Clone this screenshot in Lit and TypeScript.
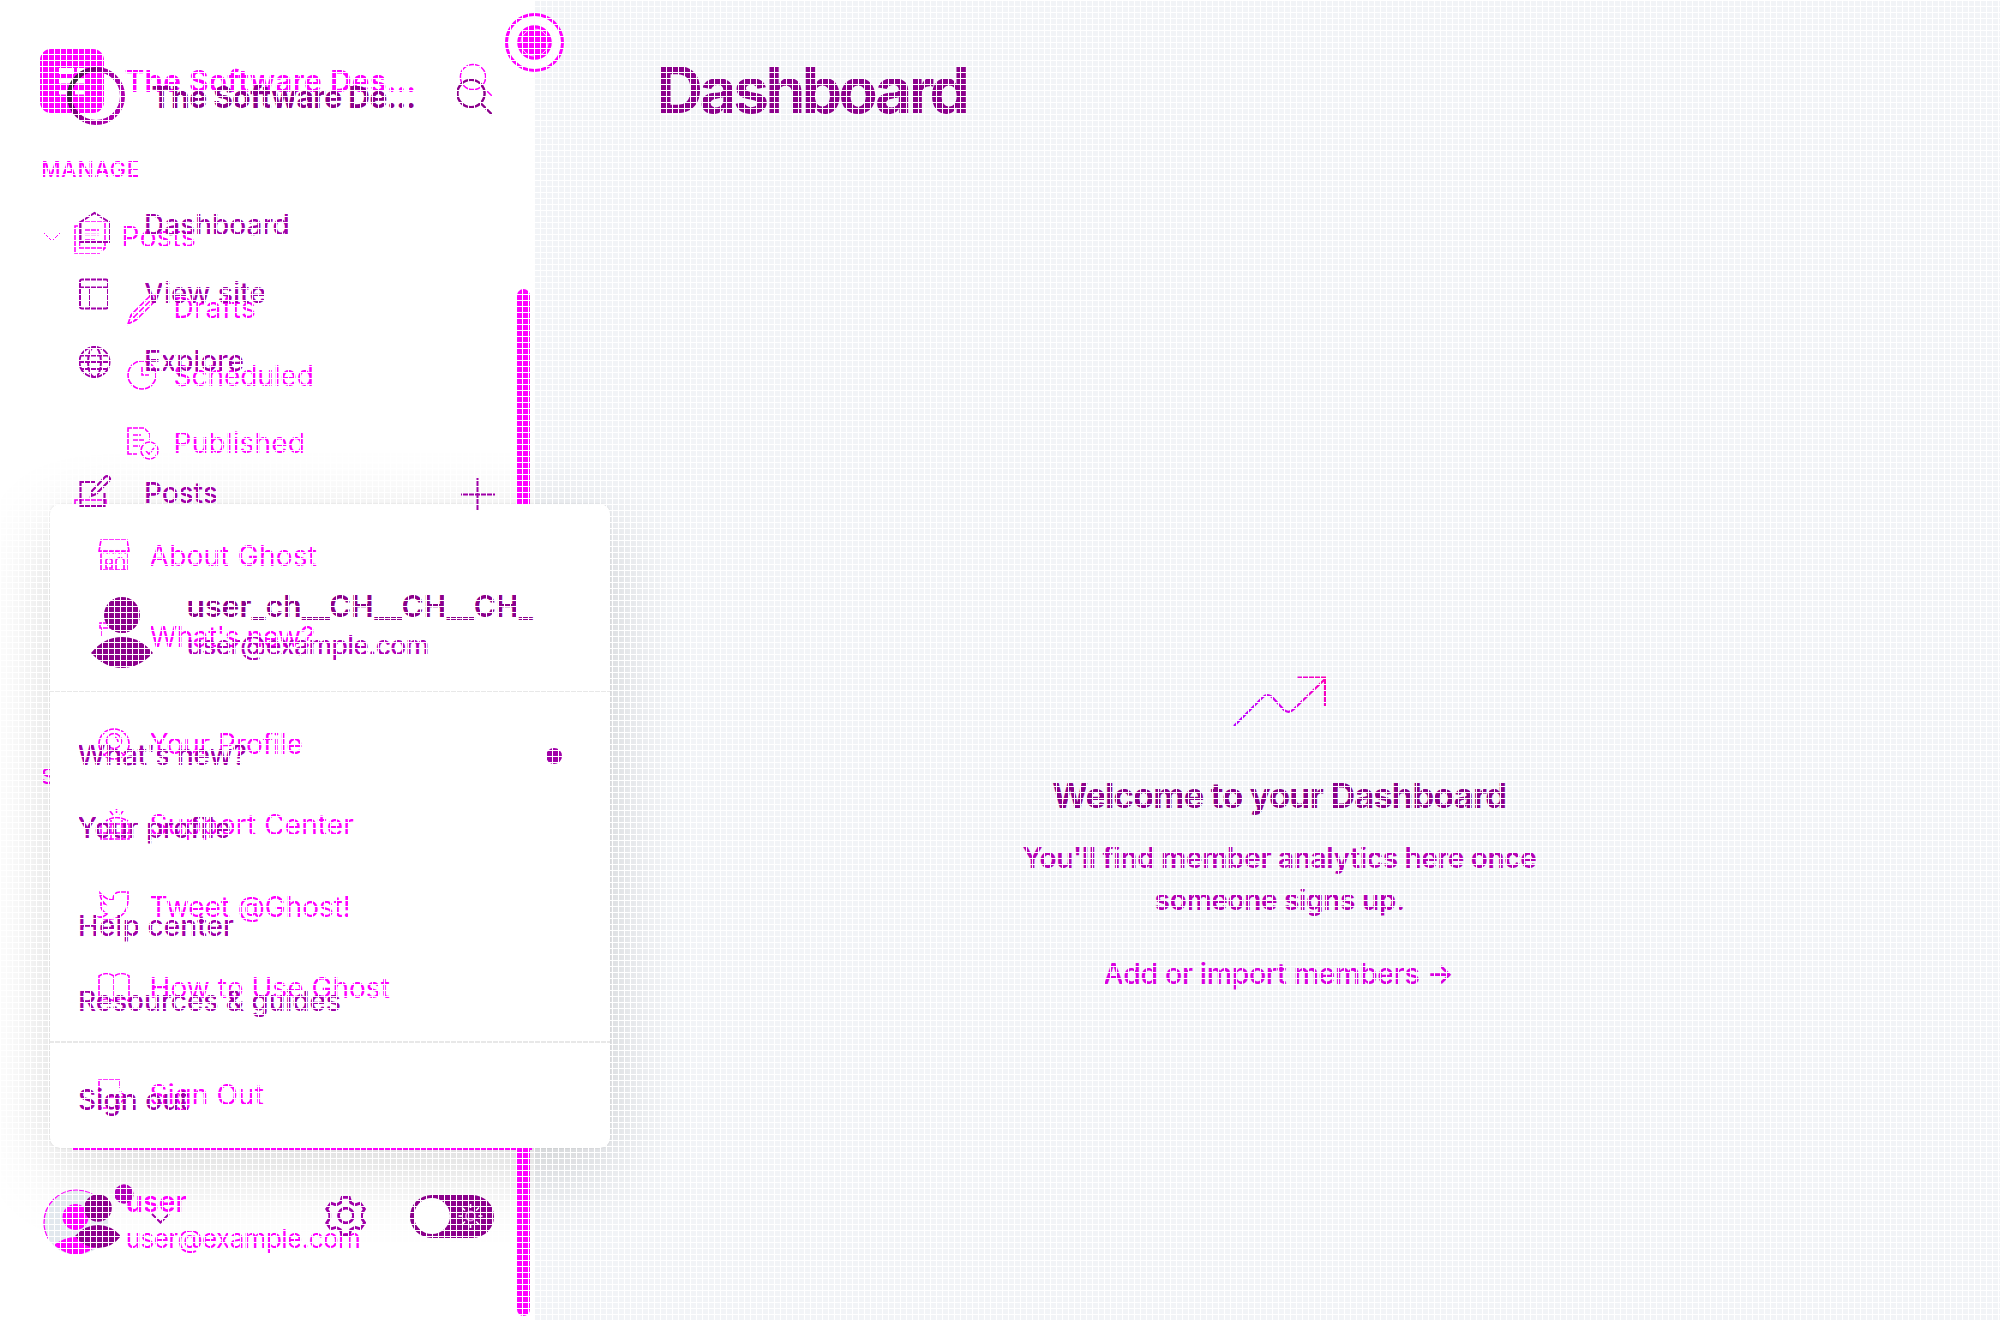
import { LitElement, html, svg, css, TemplateResult } from "lit";
import { customElement } from "lit/decorators.js";
import { styleMap } from "lit/directives/style-map.js";

const HOT = "#ff00ff";
const DEEP = "#8b008b";
const MID = "#a000a8";
const ROW = 40;

const pen = document.createElement("canvas").getContext("2d")!;

/** Letter spacing that makes a label span the given width. */
function tracking(text: string, size: number, weight: number, width: number): number {
  pen.font = `${weight} ${size}px Inter`;
  return (width - pen.measureText(text).width) / (text.length - 1);
}

interface Part { x: number; body: TemplateResult; }
interface Row { mid: number; parts: Part[]; }

/** A label whose ink runs from x to end. */
function label(x: number, end: number, text: string, size: number, weight: number, color: string): Part {
  const from = x - size * 0.05;
  const width = end - from + size * 0.03;
  return {
    x: from,
    body: html`<span class="label" style=${styleMap({
      fontSize: `${size}px`,
      fontWeight: String(weight),
      color,
      letterSpacing: `${tracking(text, size, weight, width)}px`,
    })}>${text}</span>`,
  };
}

/** A line icon on a 32 unit box that is centred in its row. */
function icon(x: number, color: string, width: number, shape: TemplateResult): Part {
  return {
    x,
    body: html`<svg class="icon" width="32" height="32" viewBox="0 0 32 32" fill="none"
      stroke=${color} stroke-width=${width}>${shape}</svg>`,
  };
}

function rows(list: Row[]): TemplateResult[] {
  let edge = 0;
  return list.map((r) => {
    const gap = r.mid - ROW / 2 - edge;
    edge = r.mid + ROW / 2;
    return html`<div class="row" style=${styleMap({ marginTop: `${gap}px` })}>
      ${r.parts.map((p) => html`<div class="part" style=${styleMap({ marginLeft: `${p.x}px` })}>${p.body}</div>`)}
    </div>`;
  });
}

const shapes = {
  home: svg`<path d="M1.500 13 15.500 4 30 13V33H1.500Z"/>`,
  layout: svg`<rect x="1" y="2.500" width="28" height="29" rx="2"/><path d="M1 10.500h28M11 10.500v21"/>`,
  globe: svg`<circle cx="15.500" cy="17" r="15"/><ellipse cx="15.500" cy="17" rx="6.500" ry="15"/><path d="M.5 17h30M2.500 10.500h26M2.500 24h26"/>`,
  edit: svg`<path d="M16 5H1.500v24h24V15M12 19l1-5L26 0q2-2 4 0 2 2 0 4L17 17Z"/>`,
  plus: svg`<path d="M0 17.500h34M16.500 1v33"/>`,
  search: svg`<circle cx="14" cy="14" r="13.600"/><path d="m24 24 11 11"/>`,
  searchThin: svg`<circle cx="13" cy="13" r="12.600"/><path d="m26 26 6 6"/>`,
  chevron: svg`<path d="m1 12 8 8 8-8"/>`,
  pages: svg`<path d="M5.500 1H31v26H5.500ZM5 5H1v27h25M31 27l-3 3M11 9h14M11 13.500h14M11 19h10"/>`,
  pencil: svg`<path d="M1 32 4 23 23 4q3-3 5 0 2 3 0 5L9 28ZM4 23l5 5M7 25 25 7"/>`,
  clock: svg`<circle cx="15" cy="15" r="14"/><path d="M15 6v9h7"/>`,
  published: svg`<path d="M10 27H1V1h16l6 6v6M5 8h9M5 13h12M5 19h8"/><circle cx="22.500" cy="23.500" r="8.500"/><path d="m19 24 3 3 5-6"/>`,
  store: svg`<path d="M3 0h26l2 11H1ZM1 11q3 4 6 0 3 4 6 0 3 4 6 0 3 4 6 0 3 4 6 0M3 14v16h26V14M8 28v-8q3-3 6 0v8ZM18 30V20q4-5 8 0v10M8 24h6"/>`,
  gift: svg`<path d="M2 2h28v5H2ZM4 7v8M27 7v5"/>`,
  profile: svg`<circle cx="16" cy="16" r="15"/><circle cx="16" cy="13" r="7.500"/><path d="M6 27q10-10 20 0M16 9q4 1 4 5"/>`,
  support: svg`<path d="M18.500 0v4M12 2l3 4M25 2l-3 4M8 12q10-7 22 0M3 15h28v15H3ZM13 11v20M24 11v20M3 24h28"/>`,
  bird: svg`<path d="M2 2q6 7 13 7 0-8 7-8h8v8q-1 18-17 19-7 1-12-2 5 0 8-3Q2 20 3 12l4 1Q2 8 2 2Z"/>`,
  book: svg`<path d="M1 29V4q7-5 15 0v25M16 4q8-5 15 0v25q-7-4-15 0-7-4-15 0"/>`,
  exit: svg`<path d="M22 9V1H1v28h21v-5M11 18h17M22 12l6 6-6 6"/>`,
};

const item = (mid: number, shape: TemplateResult, end: number, text: string): Row => ({
  mid,
  parts: [icon(98, HOT, 1.6, shape), label(151, end, text, 28, 400, HOT)],
});

const navBack: Row[] = [
  {
    mid: 81,
    parts: [
      {
        x: 40,
        body: html`<svg class="icon" width="64" height="64" viewBox="0 0 64 64">
          <rect width="64" height="64" rx="11" fill="#ff00ff"/>
          <path fill="#fff" d="M19 19h15v6H19ZM37 19h8v5h-8ZM19 29.500h26v5H19ZM19 41h7v4.500h-7ZM35 41h10v4.500H35Z"/>
        </svg>`,
      },
      label(126, 415, "The Software Des...", 30, 600, HOT),
      icon(460, HOT, 1.5, svg`<g transform="translate(0 -1)">${shapes.searchThin}</g>`),
    ],
  },
  { mid: 169, parts: [label(42, 139, "MANAGE", 21.5, 500, HOT)] },
  { mid: 236.5, parts: [icon(43, HOT, 1, shapes.chevron), icon(74, HOT, 1.6, shapes.pages), label(123, 195, "Posts", 28, 400, HOT)] },
  { mid: 308, parts: [icon(127, HOT, 1.6, shapes.pencil), label(175, 255, "Drafts", 28, 400, HOT)] },
  { mid: 376, parts: [icon(127, HOT, 1.6, shapes.clock), label(175, 313, "Scheduled", 28, 400, HOT)] },
  { mid: 443, parts: [icon(127, HOT, 1.6, shapes.published), label(175, 304, "Published", 28, 400, HOT)] },
  { mid: 514.5, parts: [icon(74, HOT, 1.6, svg`<rect x="1" y="1" width="31" height="30"/>`)] },
  { mid: 776, parts: [label(42, 146, "SETTINGS", 21.5, 500, HOT)] },
];

const footBack: Row[] = [
  { mid: 1202, parts: [label(127, 186, "user", 28.5, 600, HOT)] },
  {
    mid: 1222,
    parts: [{
      x: 43,
      body: html`<svg class="icon" width="67" height="67" viewBox="0 0 67 67">
        <circle cx="33.500" cy="33.500" r="32.500" fill="#e2e8ee" stroke="#ff00ff" stroke-width="1.200" stroke-dasharray="95 200" stroke-dashoffset="-85"/>
        <circle cx="32.500" cy="28" r="13" fill="#ff00ff"/>
        <path fill="#ff00ff" d="M11 56q21-16 44 0-22 19-44 0Z"/>
      </svg>`,
    }],
  },
  { mid: 1238.5, parts: [label(127, 360, "user@example.com", 26, 400, HOT)] },
];

const menuBack: Row[] = [
  item(556, shapes.store, 316, "About Ghost"),
  item(637, shapes.gift, 314, "What's new?"),
  item(744, shapes.profile, 302, "Your Profile"),
  item(824.5, shapes.support, 353, "Support Center"),
  item(907, shapes.bird, 350, "Tweet @Ghost!"),
  item(988, shapes.book, 389, "How to Use Ghost"),
  item(1095, shapes.exit, 263, "Sign Out"),
];

const navFront: Row[] = [
  {
    mid: 97,
    parts: [
      {
        x: 67,
        body: html`<svg class="icon" width="58" height="60" viewBox="0 0 58 60" fill="none">
          <defs><linearGradient id="ring" x1="0" x2="1" y1=".3" y2=".7">
            <stop offset="0" stop-color="#2c3030"/><stop offset=".2" stop-color="#6a006a"/>
            <stop offset=".5" stop-color="#a000a0"/><stop offset="1" stop-color="#b000b0"/>
          </linearGradient></defs>
          <circle cx="29" cy="29" r="26.500" stroke="url(#ring)" stroke-width="5"/>
        </svg>`,
      },
      label(153, 415, "The Software De...", 30, 700, DEEP),
      icon(457, DEEP, 2.4, svg`<g transform="translate(0 -1.500)">${shapes.search}</g>`),
    ],
  },
  { mid: 224.5, parts: [icon(79, MID, 2, shapes.home), label(145.5, 289, "Dashboard", 28, 450, MID)] },
  { mid: 293, parts: [icon(79, MID, 2, shapes.layout), label(145.5, 265, "View site", 28, 450, MID)] },
  { mid: 361, parts: [icon(79, MID, 2, shapes.globe), label(145.5, 243, "Explore", 28, 450, MID)] },
  { mid: 493, parts: [icon(79, MID, 2.2, shapes.edit), label(145.5, 217, "Posts", 28, 450, MID), icon(461, MID, 2, shapes.plus)] },
];

const footFront: Row[] = [
  {
    mid: 1216,
    parts: [
      {
        x: 75,
        body: html`<svg class="icon" width="62" height="70" viewBox="0 0 62 70">
          <circle cx="23" cy="27" r="13.800" fill="#8b008b"/>
          <path fill="#8b008b" d="M0 55Q10 44 23 44T46 55Q37 67 23 67T0 55Z"/>
          <circle cx="49" cy="13" r="9.700" fill="#b000b8"/>
        </svg>`,
      },
      icon(151, MID, 2, svg`<path d="m1 14 8.500 8.500L18 14"/>`),
      icon(326, MID, 2.8, svg`<path d="M16.100-2.600h7.200l1.500 5.300 4.200 2.200 5.200-1.800 4.300 6-2.900 4.600v4.700l3 4.400-4.200 6-5.300-1.500-4.400 2.400-1.500 5.300h-7.200l-1.600-5.200-4.300-2.400-5.300 1.500-4.100-6 3-4.500v-4.700l-3-4.600 4.200-6 5.300 1.800 4.300-2.200Z"/><circle cx="20" cy="15.500" r="7.500"/>`),
      {
        x: 410,
        body: html`<div class="toggle"><span class="knob"></span>
          <svg width="28" height="28" viewBox="0 0 28 28" fill="none" stroke="#fff" stroke-width="1.600">
            <circle cx="13.500" cy="14" r="4.600" stroke="#e890e8"/>
            <path d="M13.500 2v4M13.500 22v4M1.500 14h4M21.500 14h4M5 5.500l3 3M19 19.500l3 3M5 22.500l3-3M19 8.500l3-3"/>
          </svg></div>`,
      },
    ],
  },
];

const menuFront: Row[] = [
  { mid: 605.5, parts: [label(188, 532, "user_ch__CH__CH__CH_", 30, 600, DEEP)] },
  {
    mid: 632,
    parts: [{
      x: 91,
      body: html`<svg class="icon" width="62" height="74" viewBox="0 0 62 74" fill="#8b008b">
        <circle cx="31" cy="20" r="18"/>
        <path d="M0 58Q13 42 31 42T62 58Q48 73 31 73T0 58Z"/>
      </svg>`,
    }],
  },
  { mid: 644.5, parts: [label(188, 428.5, "user@example.com", 26.5, 450, "#b000b8")] },
  { mid: 755, parts: [label(79, 246, "What's new?", 28, 450, MID), { x: 546, body: html`<div class="dot"></div>` }] },
  { mid: 828, parts: [label(79, 230, "Your profile", 28, 450, MID)] },
  { mid: 926, parts: [label(79.5, 233, "Help center", 28, 450, MID)] },
  { mid: 1000.5, parts: [label(79.5, 340, "Resources & guides", 28, 450, MID)] },
  { mid: 1100, parts: [label(79.5, 188, "Sign out", 28, 450, MID)] },
];

const content: Row[] = [
  { mid: 90, parts: [label(125, 433, "Dashboard", 64, 700, DEEP)] },
  {
    mid: 702,
    parts: [{
      x: 698,
      body: html`<svg class="icon" width="94" height="54" viewBox="0 0 94 54" fill="none" stroke="url(#trend)" stroke-width="2.200">
        <defs><linearGradient id="trend" gradientUnits="userSpaceOnUse" x1="0" y1="54" x2="94" y2="0">
          <stop offset="0" stop-color="#b400ff"/><stop offset=".6" stop-color="#d800e8"/><stop offset="1" stop-color="#ff00b4"/>
        </linearGradient></defs>
        <path d="M1 51 30 22q5-4 10 1l11 12q5 4 10-1L92 4M64.500 2.500h27.500V31"/>
      </svg>`,
    }],
  },
  { mid: 795.5, parts: [label(519, 971, "Welcome to your Dashboard", 34.5, 700, DEEP)] },
  { mid: 858, parts: [label(489, 1001, "You'll find member analytics here once", 28, 600, "#b400b4")] },
  { mid: 899.5, parts: [label(621, 869, "someone signs up.", 28, 600, "#b400b4")] },
  { mid: 973.5, parts: [label(570, 918, "Add or import members →", 28.5, 550, "#d800e0")] },
];

@customElement("app-root")
export class AppRoot extends LitElement {
  static styles = css`
    :host { display: block; font-family: Inter, "Liberation Sans", sans-serif; }
    .stage { display: grid; width: 2000px; height: 1320px; overflow: hidden; background: #fff; }
    .layer { grid-area: 1 / 1; z-index: 0; min-width: 0; min-height: 0; height: 1320px; overflow: hidden; display: flow-root; }
    .frame { display: flex; }
    .side { width: 534px; flex: none; border-right: 1px solid #e3e6ea; background: #fff; }
    .main { flex: 1; min-width: 0; background: #f2f4f7; display: flow-root; }
    .row { display: grid; grid-template-columns: 100%; height: 40px; align-items: center; }
    .part { grid-area: 1 / 1; display: flex; align-items: center; height: 40px; width: max-content; }
    .label { white-space: pre; line-height: 40px; }
    .icon { display: block; overflow: visible; flex: none; }
    .track { display: flex; flex-direction: column; gap: 644px; padding: 289px 0 0 517px; box-sizing: border-box; }
    .bar { width: 13px; background: #ff00ff; flex: none; }
    .upper { height: 215px; border-radius: 7px 7px 0 0; }
    .lower { height: 168px; border-radius: 0 0 7px 7px; }
    .target { width: 59px; height: 59px; margin: 12.5px 0 0 505px; display: block; overflow: visible; }
    .card {
      box-sizing: border-box; width: 560px; height: 644px; margin: 504px 0 0 50px;
      border-radius: 10px; background: #fff; display: flex; flex-direction: column;
      box-shadow: 0 0 2px rgba(0, 0, 0, 0.14), 0 22px 78px rgba(0, 0, 0, 0.16);
    }
    .edge { width: 460px; height: 2px; margin: 1148px 0 0 72px; background: #ff00ff; }
    .head { height: 186px; border-bottom: 2px solid #e8e8e8; }
    .body { height: 349px; border-bottom: 2px solid #e8e8e8; }
    .dot { width: 16px; height: 16px; border-radius: 50%; background: #a000a8; margin-top: 2px; }
    .toggle {
      box-sizing: border-box; width: 84px; height: 43px; border-radius: 22px; background: #8b008b;
      display: flex; align-items: center; padding: 0 8px 0 4px; gap: 7px;
    }
    .knob { width: 36px; height: 36px; border-radius: 50%; background: #fff; flex: none; }
    .mesh {
      background:
        repeating-linear-gradient(90deg, #fff 0 1px, transparent 1px 6px),
        repeating-linear-gradient(#fff 0 1px, transparent 1px 6px);
    }
  `;

  render() {
    return html`<div class="stage">
      <div class="layer frame">
        <div class="side"></div>
        <div class="main">${rows(content)}</div>
      </div>
      <div class="layer">${rows(navBack)}</div>
      <div class="layer">
        <svg class="target" viewBox="0 0 59 59" fill="none" stroke="#ff00ff">
          <circle cx="29.500" cy="29.500" r="28" stroke-width="3" fill="#fff"/>
          <circle cx="29.500" cy="29.500" r="17.300" fill="#ff00ff" stroke="none"/>
          <circle cx="29.500" cy="29.500" r="13.500" stroke="#fff" stroke-width=".8" stroke-dasharray="14 7"/>
        </svg>
      </div>
      <div class="layer"><div class="card"><div class="head"></div><div class="body"></div></div></div>
      <div class="layer"><div class="edge"></div></div>
      <div class="layer track"><div class="bar upper"></div><div class="bar lower"></div></div>
      <div class="layer">${rows(footBack)}</div>
      <div class="layer">${rows(menuBack)}</div>
      <div class="layer">${rows(navFront)}</div>
      <div class="layer">${rows(menuFront)}</div>
      <div class="layer">${rows(footFront)}</div>
      <div class="layer mesh"></div>
    </div>`;
  }
}
